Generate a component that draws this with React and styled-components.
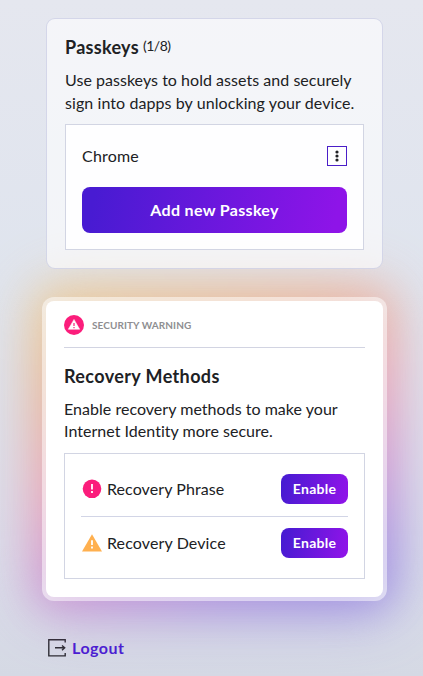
import React from "react";
import styled, { createGlobalStyle } from "styled-components";

const Global = createGlobalStyle`
  * { box-sizing: border-box; }
  body {
    margin: 0;
    font-family: Lato, "Liberation Sans", sans-serif;
    font-variant-ligatures: none;
    color: #202124;
    background: #dfe3ec;
  }
`;

const Page = styled.main`
  position: relative;
  z-index: 0;
  height: 676px;
  overflow: hidden;
  padding: 18px 40px 0 46px;
  background: linear-gradient(180deg, #e5e7ef 0%, #dfe4ee 42%, #dadeea 80%, #d5d9e4 100%);
`;

const Card = styled.section`
  position: relative;
  z-index: 1;
  width: 337px;
  height: 251px;
  padding: 17px 18px;
  border: 1px solid rgba(190, 194, 222, 0.6);
  border-radius: 9px;
  background: rgba(255, 255, 255, 0.6);
`;

const Glow = styled.div`
  position: absolute;
  inset: -14px -12px;
  z-index: -1;
  border-radius: 24px;
  background: linear-gradient(160deg, #f2bd64 5%, #f3a064 24%, #f37f98 48%, #c468c8 68%, #8560dc 84%, #7560e0 100%);
  filter: blur(${(p) => p.$blur});
  opacity: ${(p) => p.$opacity};
`;

const WarningCard = styled.section`
  position: relative;
  z-index: 0;
  width: 337px;
  height: 296px;
  margin-top: 32px;
  padding: 14px 18px;
`;

const Surface = styled.div`
  position: absolute;
  inset: 0;
  z-index: -1;
  border-radius: 8px;
  background: #fff;
  box-shadow: 0 0 0 4px rgba(255, 255, 255, 0.5);
`;

const Warning = styled.div`
  display: flex;
  align-items: center;
  gap: 8px;
  height: 33px;
  padding-bottom: 13px;
  border-bottom: 1px solid #d2d4e2;
  color: #8e8e91;
  font-size: 10px;
  font-weight: 700;
  letter-spacing: ${(p) => p.$spacing};
`;

const Heading = styled.h2`
  display: flex;
  align-items: center;
  gap: 4px;
  margin: ${(p) => p.$top || "0"} 0 0;
  font-size: 18px;
  line-height: 22px;
  font-weight: 700;
  letter-spacing: ${(p) => p.$spacing};
`;

const Count = styled.span`
  margin-top: -2px;
  font-size: 14px;
  line-height: 20px;
  font-weight: 400;
  letter-spacing: -0.5px;
`;

const Copy = styled.p`
  margin: ${(p) => p.$top} 0 0;
  font-size: 16px;
  line-height: ${(p) => p.$leading || "22.5px"};
  white-space: nowrap;
`;

const Line = styled.span`
  display: block;
  letter-spacing: ${(p) => p.$spacing};
`;

const Panel = styled.div`
  height: 126px;
  margin-top: ${(p) => p.$top};
  padding: ${(p) => p.$pad};
  border: 1px solid #d2d5e3;
  background: ${(p) => p.$fill || "#fff"};
`;

const Row = styled.div`
  display: flex;
  align-items: center;
  justify-content: space-between;
  height: ${(p) => p.$height};
  padding-bottom: ${(p) => p.$bottom || "0"};
  border-bottom: ${(p) => (p.$ruled ? "1px solid #d2d5e6" : "0")};
`;

const Label = styled.span`
  display: flex;
  align-items: center;
  gap: 5px;
  font-size: 16px;
  line-height: 22px;
  letter-spacing: ${(p) => p.$spacing};
`;

const Button = styled.button`
  display: block;
  width: ${(p) => (p.$small ? "67px" : "265px")};
  height: ${(p) => (p.$small ? "30px" : "46px")};
  padding: 0 0 2px;
  border: 0;
  border-radius: 8px;
  color: #fff;
  font: 700 ${(p) => (p.$small ? "14px" : "16px")} Lato, sans-serif;
  letter-spacing: ${(p) => p.$spacing};
  background: linear-gradient(100deg, #481bd2 5%, #8e14e8 95%);
`;

const MenuButton = styled.button`
  display: flex;
  align-items: center;
  justify-content: center;
  width: 20px;
  height: 20px;
  padding: 0;
  border: 1px solid #4a1ec8;
  background: #fff;
`;

const Logout = styled.a`
  display: flex;
  align-items: center;
  gap: 6px;
  width: max-content;
  height: 20px;
  margin: 41px 0 0 2px;
  color: #481bd2;
  font-size: 16px;
  font-weight: 700;
  line-height: 20px;
  letter-spacing: ${(p) => p.$spacing};
`;

const BadgeIcon = () => (
  <svg width="20" height="20" viewBox="0 0 20 20">
    <circle cx="10" cy="10" r="10" fill="#fb1d7b" />
    <path d="M10 4.4 15.7 14.3H4.3Z" fill="#fff" stroke="#fff" strokeWidth=".5" strokeLinejoin="round" />
    <path d="M10 8v3.1M10 12.1v1.1" stroke="#fb1d7b" strokeWidth="1.2" />
  </svg>
);

const AlertIcon = () => (
  <svg width="21" height="20" viewBox="0 0 21 20">
    <circle cx="11" cy="9.8" r="9.3" fill="#fb1d7b" />
    <path d="M11 5v5.4M11 12v1.9" stroke="#fff" strokeWidth="1.8" />
  </svg>
);

const TriangleIcon = () => (
  <svg width="21" height="20" viewBox="0 0 21 20">
    <path d="M11 1.2 21 18.5H1Z" fill="#ffb04f" />
    <path d="M11 7.2v4.8M11 13.6v1.9" stroke="#fff" strokeWidth="1.8" />
  </svg>
);

const DotsIcon = () => (
  <svg width="6" height="12" viewBox="0 0 6 12" fill="#202124">
    <circle cx="3" cy="2" r="1.6" />
    <circle cx="3" cy="6" r="1.6" />
    <circle cx="3" cy="10" r="1.6" />
  </svg>
);

const LogoutIcon = () => (
  <svg width="18" height="18" viewBox="0 0 18 18" fill="none" stroke="#2b2b31" strokeWidth="1.4">
    <path d="M17.2 3.6V.8H.8v16.1h16.4v-2.8" />
    <path d="M7 8.8h9.5M14 6.4l2.7 2.4L14 11.2" />
  </svg>
);

export default function App() {
  return (
    <>
      <Global />
      <Page>
        <Card>
          <Heading $spacing="0.3px">
            Passkeys <Count>(1/8)</Count>
          </Heading>
          <Copy $top="11px">
            <Line $spacing="0.035px">Use passkeys to hold assets and securely</Line>
            <Line $spacing="0.08px">sign into dapps by unlocking your device.</Line>
          </Copy>
          <Panel $top="10px" $pad="20px 16px 0" $fill="rgba(255,255,255,.9)">
            <Row $height="42px" $bottom="20px">
              <Label $spacing="0.2px">Chrome</Label>
              <MenuButton aria-label="Options"><DotsIcon /></MenuButton>
            </Row>
            <Button $spacing="0.33px">Add new Passkey</Button>
          </Panel>
        </Card>

        <WarningCard>
          <Glow $blur="32px" $opacity="0.45" />
          <Glow $blur="18px" $opacity="0.32" />
          <Surface />
          <Warning $spacing="0.08px"><BadgeIcon />SECURITY WARNING</Warning>
          <Heading $top="17px" $spacing="0.38px">Recovery Methods</Heading>
          <Copy $top="11px" $leading="22px">
            <Line $spacing="0.03px">Enable recovery methods to make your</Line>
            <Line $spacing="0.03px">Internet Identity more secure.</Line>
          </Copy>
          <Panel $top="11px" $pad="20px 16px 0">
            <Row $height="43px" $bottom="12px" $ruled>
              <Label $spacing="0.08px"><AlertIcon />Recovery Phrase</Label>
              <Button $small $spacing="0.25px">Enable</Button>
            </Row>
            <Row $height="52px">
              <Label $spacing="0.12px"><TriangleIcon />Recovery Device</Label>
              <Button $small $spacing="0.25px">Enable</Button>
            </Row>
          </Panel>
        </WarningCard>

        <Logout $spacing="0.5px"><LogoutIcon />Logout</Logout>
      </Page>
    </>
  );
}
